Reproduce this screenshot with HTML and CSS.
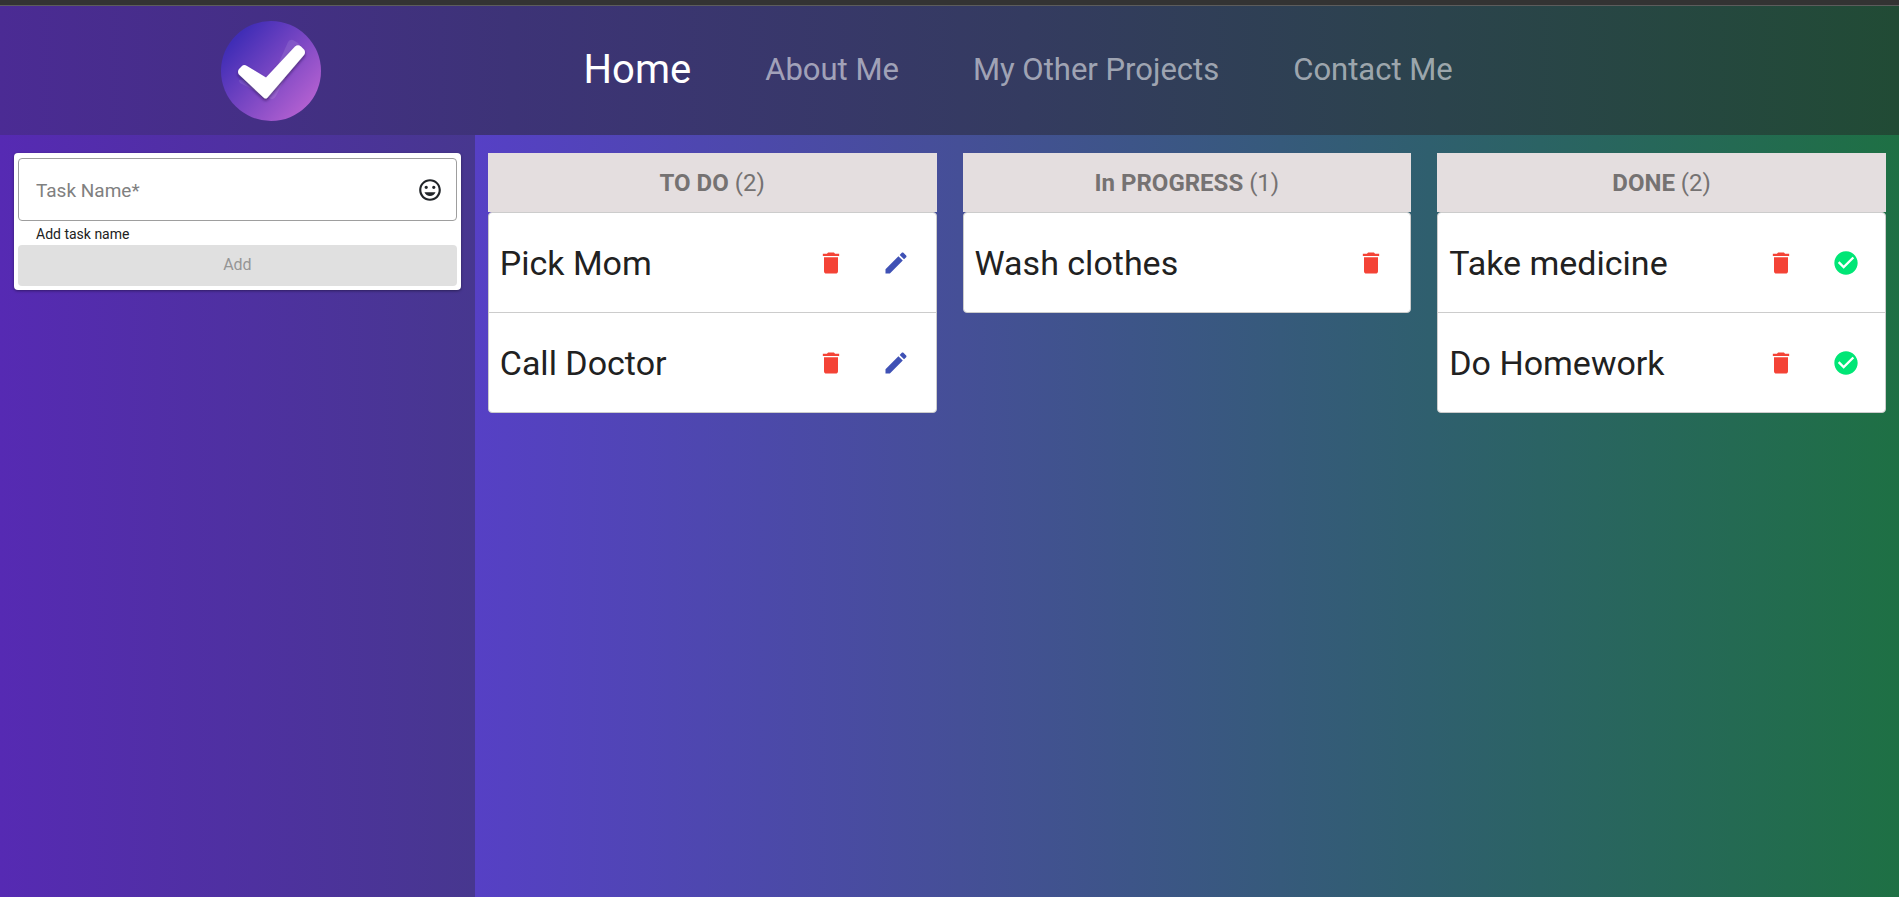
FILE: index.html
```
<!DOCTYPE html>
<html lang="en">
<head>
  <meta charset="UTF-8">
  <meta name="viewport" content="width=device-width, initial-scale=1.0">
  <title>Task Board</title>
  <link rel="stylesheet" href="styles.css">
</head>
<body>
  <!-- icons used in the lists -->
  <svg class="sprite" aria-hidden="true">
    <symbol id="delete" viewBox="0 0 24 24"><path d="M6 19c0 1.1.9 2 2 2h8c1.1 0 2-.9 2-2V7H6v12zM19 4h-3.500l-1-1h-5l-1 1H5v2h14V4z"/></symbol>
    <symbol id="edit" viewBox="0 0 24 24"><path d="M3 17.250V21h3.750L17.810 9.940l-3.750-3.750L3 17.250zM20.710 7.040c.39-.39.39-1.020 0-1.410l-2.340-2.340c-.39-.39-1.020-.39-1.410 0l-1.830 1.830 3.750 3.750 1.830-1.830z"/></symbol>
    <symbol id="check" viewBox="0 0 24 24"><path d="M12 2C6.480 2 2 6.480 2 12s4.480 10 10 10 10-4.480 10-10S17.520 2 12 2zm-2 15l-5-5 1.410-1.410L10 14.170l7.590-7.590L19 8l-9 9z"/></symbol>
  </svg>

  <header class="navbar">
    <a class="logo" href="#" aria-label="Task Board">
      <svg width="100" height="100" viewBox="0 0 100 100">
        <defs>
          <linearGradient id="logoFill" x1="0.12" y1="0.2" x2="0.85" y2="0.85">
            <stop offset="0" stop-color="#402db6"/>
            <stop offset="1" stop-color="#b05fd0"/>
          </linearGradient>
          <filter id="logoShadow" x="-20%" y="-20%" width="140%" height="140%">
            <feDropShadow dx="0" dy="2" stdDeviation="1.5" flood-color="#201040" flood-opacity="0.6"/>
          </filter>
        </defs>
        <circle cx="50" cy="50" r="50" fill="url(#logoFill)"/>
        <path d="M18 59Q18 62 21 63L50 78Q53 79 55 75L79 28Q80 25 77 22L72 19Q69 18 67 21L52 55Z" fill="#fff" fill-opacity="0.1"/>
        <path d="M18 48L21 45Q23 43 26 45L45 56.500L74 25.500Q77 23 80 25.500L83 28.500Q85 31 83 34L47 76Q45 79 42 76L18 53.500Q16 51 18 48Z" fill="#fff" filter="url(#logoShadow)"/>
      </svg>
    </a>
    <nav class="links">
      <a class="link active" href="#">Home</a>
      <a class="link" href="#about">About Me</a>
      <a class="link" href="#projects">My Other Projects</a>
      <a class="link" href="#contact">Contact Me</a>
    </nav>
  </header>

  <main class="content">
    <aside class="sidebar">
      <form class="task-form">
        <div class="field">
          <input class="task-input" type="text" placeholder="Task Name*" aria-label="Task Name" aria-describedby="hint" required>
          <svg class="emoji" viewBox="0 0 24 24" aria-hidden="true"><path d="M11.990 2C6.470 2 2 6.480 2 12s4.470 10 9.990 10C17.520 22 22 17.520 22 12S17.520 2 11.990 2zM12 20c-4.420 0-8-3.580-8-8s3.580-8 8-8 8 3.580 8 8-3.580 8-8 8zm3.500-9c.83 0 1.500-.67 1.500-1.500S16.330 8 15.500 8 14 8.670 14 9.500s.67 1.500 1.500 1.500zm-7 0c.83 0 1.500-.67 1.500-1.500S9.330 8 8.500 8 7 8.670 7 9.500 7.670 11 8.500 11zm3.500 6.500c2.330 0 4.310-1.460 5.110-3.500H6.890c.8 2.040 2.780 3.500 5.110 3.500z"/></svg>
        </div>
        <p class="hint" id="hint">Add task name</p>
        <button class="add-button" type="submit" disabled>Add</button>
      </form>
    </aside>

    <div class="board">
      <section class="column">
        <h2 class="column-title"><strong>TO DO</strong> (2)</h2>
        <ul class="task-list">
          <li class="task">
            <span class="task-name">Pick Mom</span>
            <button class="icon-button delete" aria-label="Delete"><svg class="icon"><use href="#delete"/></svg></button>
            <button class="icon-button edit" aria-label="Edit"><svg class="icon"><use href="#edit"/></svg></button>
          </li>
          <li class="task">
            <span class="task-name">Call Doctor</span>
            <button class="icon-button delete" aria-label="Delete"><svg class="icon"><use href="#delete"/></svg></button>
            <button class="icon-button edit" aria-label="Edit"><svg class="icon"><use href="#edit"/></svg></button>
          </li>
        </ul>
      </section>

      <section class="column">
        <h2 class="column-title"><strong>In PROGRESS</strong> (1)</h2>
        <ul class="task-list">
          <li class="task">
            <span class="task-name">Wash clothes</span>
            <button class="icon-button delete" aria-label="Delete"><svg class="icon"><use href="#delete"/></svg></button>
          </li>
        </ul>
      </section>

      <section class="column">
        <h2 class="column-title"><strong>DONE</strong> (2)</h2>
        <ul class="task-list">
          <li class="task">
            <span class="task-name">Take medicine</span>
            <button class="icon-button delete" aria-label="Delete"><svg class="icon"><use href="#delete"/></svg></button>
            <button class="icon-button done" aria-label="Done"><svg class="icon"><use href="#check"/></svg></button>
          </li>
          <li class="task">
            <span class="task-name">Do Homework</span>
            <button class="icon-button delete" aria-label="Delete"><svg class="icon"><use href="#delete"/></svg></button>
            <button class="icon-button done" aria-label="Done"><svg class="icon"><use href="#check"/></svg></button>
          </li>
        </ul>
      </section>
    </div>
  </main>
</body>
</html>
```
FILE: styles.css
```
* {
  box-sizing: border-box;
}
body {
  display: flex;
  flex-direction: column;
  min-height: 100vh;
  margin: 0;
  border-top: 5px solid #333;
  font-family: Roboto, sans-serif;
  color: #212121;
}
.sprite {
  display: none;
}

/* navbar */
.navbar {
  display: grid;
  grid-template-columns: 2fr 5fr;
  align-items: center;
  padding: 15px 0 14px;
  border-top: 1px solid #5c5c5c;
  background: linear-gradient(to right, #4b2b94, #3d3377 27%, #343b60 54%, #2b434c 76%, #214b35);
}
.logo {
  display: flex;
  justify-content: center;
}
.links {
  display: flex;
  align-items: center;
  padding: 0 0 4px 4px;
}
.link {
  padding: 0 37px;
  font-size: 31px;
  color: rgba(255, 255, 255, 0.55);
  text-decoration: none;
}
.link.active {
  font-size: 40px;
  color: #fff;
}

/* page */
.content {
  display: grid;
  grid-template-columns: 1fr 3fr;
  flex: 1;
}
.sidebar {
  padding: 18px 14px;
  background: linear-gradient(to right, #562ab3, #47378f);
}
.board {
  display: grid;
  grid-template-columns: repeat(3, 1fr);
  align-items: start;
  background: linear-gradient(to right, #5640c5, #454f97 34%, #2f5f6e 67%, #1e7044);
}
.column {
  padding: 18px 13px;
}

/* add task form */
.task-form {
  padding: 5px 4px 4px;
  border-radius: 4px;
  background: #fff;
  box-shadow: 0 1px 3px rgba(0, 0, 0, 0.4);
}
.field {
  display: flex;
  align-items: center;
  height: 63px;
  padding: 0 13px 0 17px;
  border: 1px solid #9e9e9e;
  border-radius: 4px;
}
.task-input {
  flex: 1;
  min-width: 0;
  padding: 2px 0 0;
  border: 0;
  outline: 0;
  background: none;
  font-family: inherit;
  font-size: 19px;
}
.task-input::placeholder {
  color: #808080;
}
.emoji {
  width: 26px;
  height: 26px;
  fill: #212529;
}
.hint {
  margin: 0;
  padding: 2px 0 0 18px;
  font-size: 14px;
  line-height: 22px;
}
.add-button {
  display: block;
  width: 100%;
  height: 41px;
  padding: 0 0 2px;
  border: 0;
  border-radius: 4px;
  background: #e0e0e0;
  font-family: inherit;
  font-size: 16px;
  color: #959595;
}

/* task columns */
.column-title {
  margin: 0;
  padding: 16px 0 15px;
  background: #e4dedf;
  font-size: 24px;
  font-weight: 400;
  line-height: 28px;
  text-align: center;
  color: #757272;
}
.task-list {
  margin: 0;
  padding: 0;
  border: 1px solid #ccc;
  border-radius: 4px;
  background: #fff;
  list-style: none;
}
.task {
  display: flex;
  align-items: center;
  height: 99px;
  padding: 0 7px 0 11px;
}
.task + .task {
  height: 100px;
  border-top: 1px solid #ccc;
}
.task-name {
  flex: 1;
  font-size: 34px;
}
.icon-button {
  display: flex;
  justify-content: center;
  width: 65px;
  padding: 18px 0;
  border: 0;
  background: none;
  cursor: pointer;
}
.icon {
  width: 28px;
  height: 28px;
  fill: currentColor;
}
.delete {
  color: #f44336;
}
.edit {
  color: #3f51b5;
}
.done {
  color: #00e676;
}
```
